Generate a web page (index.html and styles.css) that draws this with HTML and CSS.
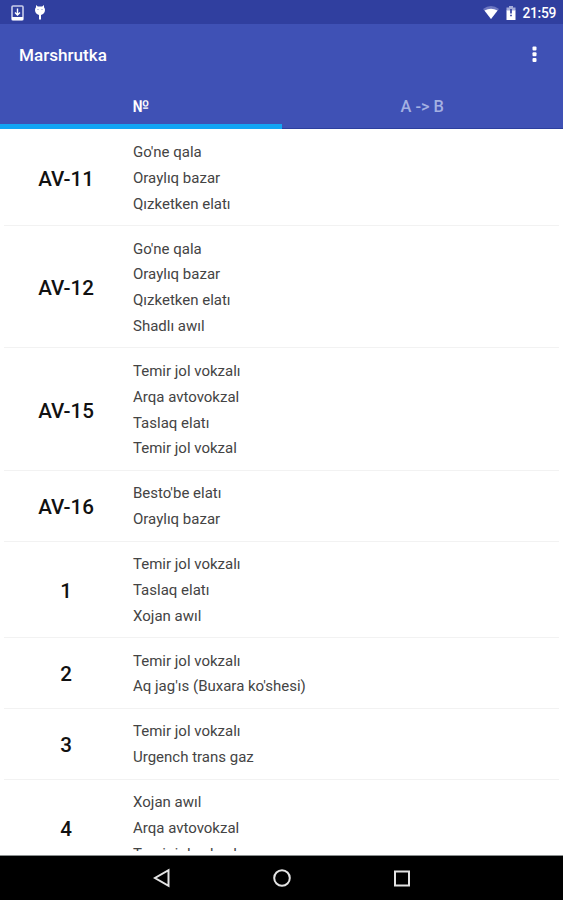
FILE: index.html
```html
<!DOCTYPE html>
<html lang="kaa">
<head>
  <meta charset="UTF-8" />
  <meta name="viewport" content="width=device-width, initial-scale=1.0"/>
  <title>Marshrutka</title>
  <link rel="stylesheet" href="styles.css">
</head>
<body>
  <div class="status-bar">
    <svg class="download" width="13" height="16" viewBox="0 0 13 16">
      <rect x="1" y="1" width="11" height="14" rx="1" fill="none" stroke="#c9cdea" stroke-width="1.6"/>
      <path d="M1 12h11v3H1z" fill="#fff"/>
      <path d="M6.5 3.5v6M4 7.5l2.5 2.5L9 7.5" fill="none" stroke="#fff" stroke-width="1.4"/>
    </svg>
    <svg class="debug" width="12" height="15" viewBox="0 0 12 15">
      <path d="M2 0l1.8 1.5h4.4L10 0v2.3c.7.8 1 1.7 1 2.7 0 2.4-1.6 4.3-4 5v4.5H5V10C2.600 9.300 1 7.400 1 5c0-1 .3-1.900 1-2.700z" fill="#fff"/>
      <circle cx="4" cy="4.500" r=".6" fill="#7782c8"/>
      <circle cx="8" cy="4.500" r=".6" fill="#7782c8"/>
    </svg>
    <span class="spacer"></span>
    <svg class="wifi" width="16" height="13" viewBox="0 0 16 13">
      <path d="M0 3Q8-3 16 3L8 13z" fill="#6d77c0"/>
      <path d="M1.500 4.500Q8 1 14.500 4.500L8 13z" fill="#fff"/>
    </svg>
    <svg class="battery" width="10" height="14" viewBox="0 0 10 14">
      <path d="M3 0h4v1.500h2.500V5h-9V1.500H3z" fill="#a5acd9"/>
      <path d="M.5 4.500h9V14h-9z" fill="#fff"/>
      <path d="M5 3v4.500M5 8.700v1.600" stroke="#303f9f" stroke-width="1.700"/>
    </svg>
    <span class="clock">21:59</span>
  </div>

  <header>
    <div class="toolbar">
      <h1>Marshrutka</h1>
      <svg width="5" height="17" viewBox="0 0 5 17" fill="#fff">
        <rect x=".5" y=".5" width="4" height="4" rx="1"/>
        <rect x=".5" y="6.300" width="4" height="4" rx="1"/>
        <rect x=".5" y="12.100" width="4" height="4" rx="1"/>
      </svg>
    </div>
    <nav class="tabs">
      <div class="tab active">№</div>
      <div class="tab">A -&gt; B</div>
    </nav>
  </header>

  <main>
    <ul class="routes">
      <li>
        <div class="number">AV-11</div>
        <div class="stops">
          <p>Go'ne qala</p>
          <p>Oraylıq bazar</p>
          <p>Qızketken elatı</p>
        </div>
      </li>
      <li>
        <div class="number">AV-12</div>
        <div class="stops">
          <p>Go'ne qala</p>
          <p>Oraylıq bazar</p>
          <p>Qızketken elatı</p>
          <p>Shadlı awıl</p>
        </div>
      </li>
      <li>
        <div class="number">AV-15</div>
        <div class="stops">
          <p>Temir jol vokzalı</p>
          <p>Arqa avtovokzal</p>
          <p>Taslaq elatı</p>
          <p>Temir jol vokzal</p>
        </div>
      </li>
      <li>
        <div class="number">AV-16</div>
        <div class="stops">
          <p>Besto'be elatı</p>
          <p>Oraylıq bazar</p>
        </div>
      </li>
      <li>
        <div class="number">1</div>
        <div class="stops">
          <p>Temir jol vokzalı</p>
          <p>Taslaq elatı</p>
          <p>Xojan awıl</p>
        </div>
      </li>
      <li>
        <div class="number">2</div>
        <div class="stops">
          <p>Temir jol vokzalı</p>
          <p>Aq jag'ıs (Buxara ko'shesi)</p>
        </div>
      </li>
      <li>
        <div class="number">3</div>
        <div class="stops">
          <p>Temir jol vokzalı</p>
          <p>Urgench trans gaz</p>
        </div>
      </li>
      <li>
        <div class="number">4</div>
        <div class="stops">
          <p>Xojan awıl</p>
          <p>Arqa avtovokzal</p>
          <p>Temir jol vokzal</p>
        </div>
      </li>
    </ul>
  </main>

  <footer class="nav-bar">
    <svg width="18" height="20" viewBox="0 0 18 20"><path d="M15.500 2.200v15.600L2 10z"/></svg>
    <svg width="18" height="20" viewBox="0 0 18 20"><circle cx="9" cy="10" r="7.800"/></svg>
    <svg width="18" height="20" viewBox="0 0 18 20"><rect x="2" y="3.500" width="14" height="14"/></svg>
  </footer>
</body>
</html>
```
FILE: styles.css
```css
* { box-sizing: border-box; }
body { margin: 0; height: 900px; display: flex; flex-direction: column; overflow: hidden; background: #fff; font-family: Roboto, sans-serif; }
h1, p, ul { margin: 0; padding: 0; }
svg { display: block; flex: none; }

.status-bar { flex: none; display: flex; align-items: center; height: 24px; padding: 1px 7px 0 11px; background: #303f9f; color: #fff; }
.debug { margin-left: 10px; }
.spacer { flex: 1; }
.battery { margin-left: 7px; }
.clock { margin-left: 6px; font-size: 13.8px; font-weight: 500; line-height: 20px; letter-spacing: -0.3px; }

header { flex: none; height: 104.8px; background: #3f51b5; color: #fff; }
.toolbar { display: flex; align-items: center; justify-content: space-between; height: 61px; padding: 0 26px 0 19px; }
h1 { font-size: 17.1px; font-weight: 500; }
.tabs { display: flex; height: 43.8px; }
.tab { flex: 1; padding-top: 2px; border-bottom: 1px solid #2c3f9e; line-height: 40px; text-align: center; font-size: 16.4px; font-weight: 500; color: #a4b0e2; }
.tab.active { border-bottom: 5px solid #12a5f4; color: #fff; }

main { flex: none; height: 722.2px; overflow: hidden; }
.routes { list-style: none; padding-top: 0.7px; }
.routes li { display: flex; align-items: center; margin: 0 4px; padding: 10.5px 0 7.7px; border-bottom: 1px solid #f2f2f2; }
.number { width: 124px; margin-right: 5px; text-align: center; font-size: 20.6px; font-weight: 500; color: #111; }
.stops p { line-height: 25.8px; font-size: 15px; color: #444; }

.nav-bar { display: flex; justify-content: center; align-items: center; gap: 102px; height: 45px; margin-top: auto; border-top: 1px solid #8a8f8f; background: #000; }
.nav-bar svg { fill: none; stroke: #e4e4e4; stroke-width: 2; }
```
